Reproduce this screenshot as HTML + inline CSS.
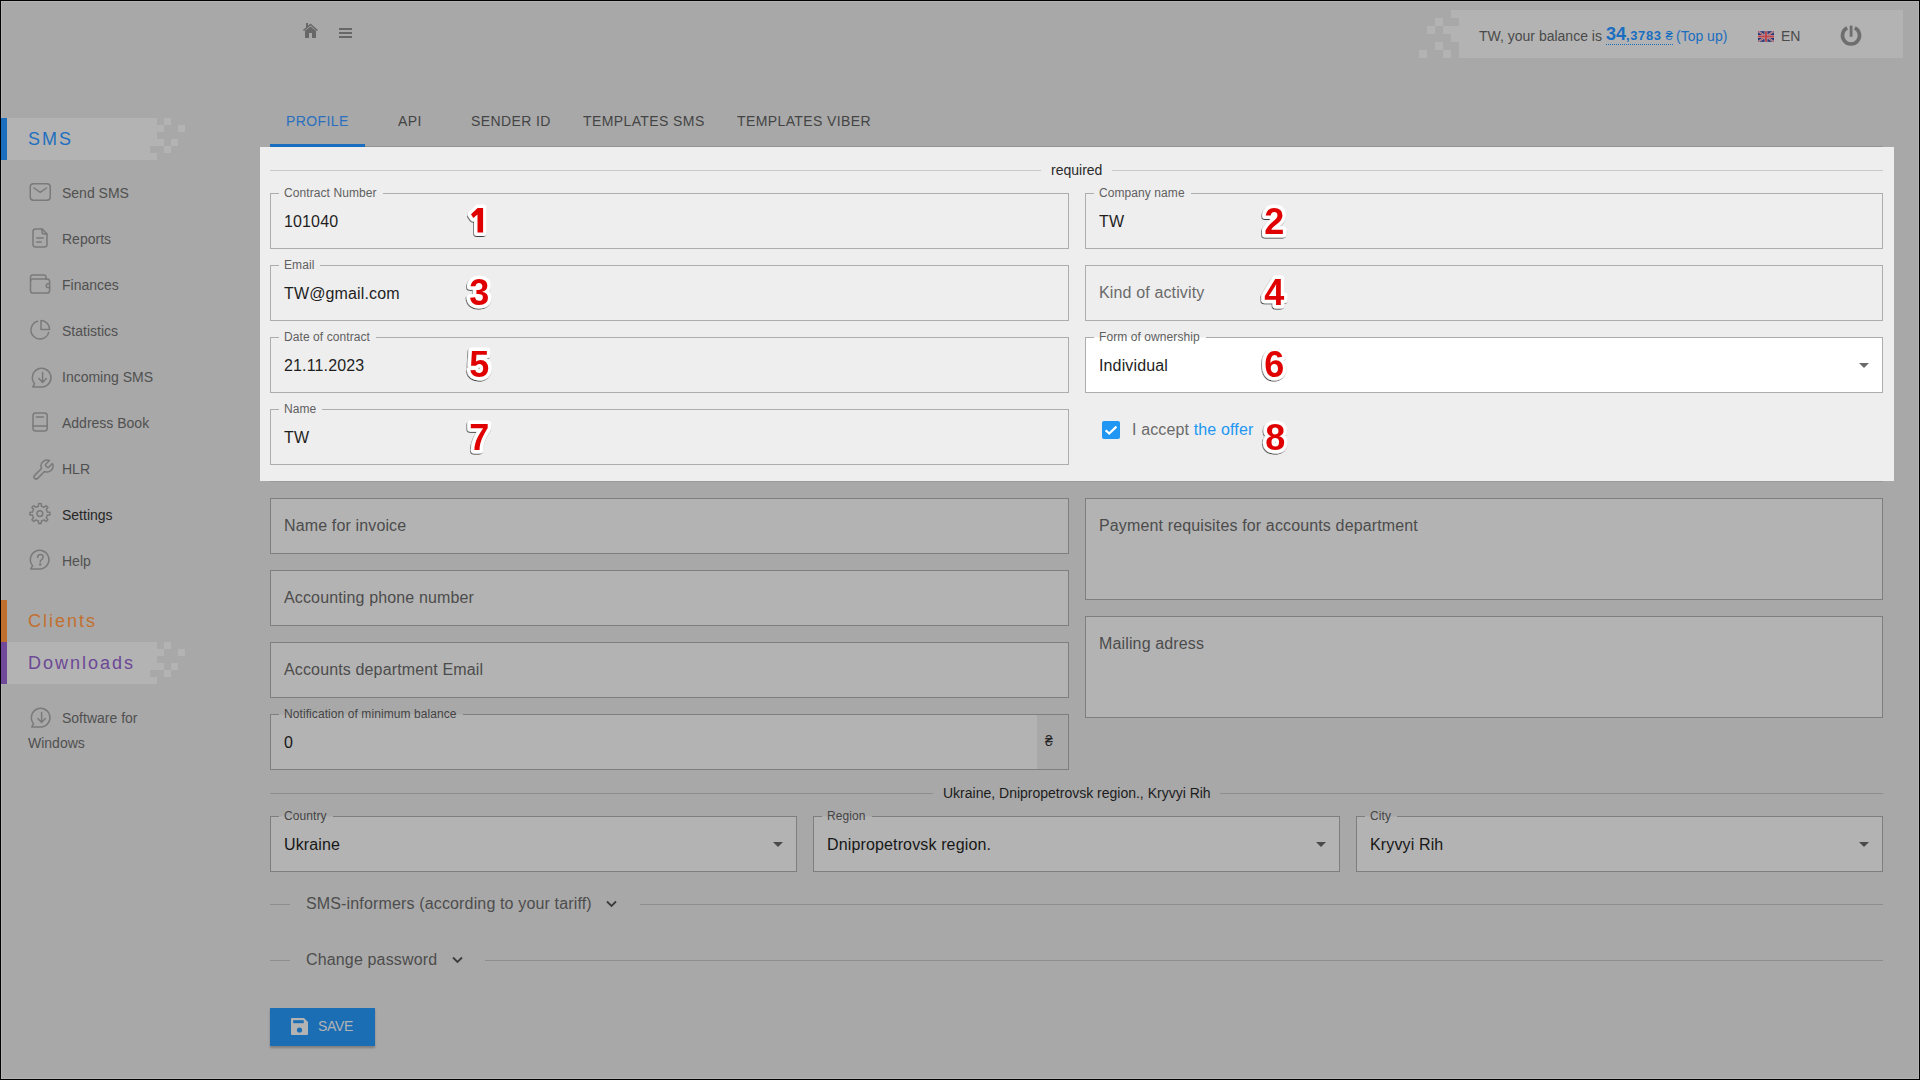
<!DOCTYPE html>
<html><head><meta charset="utf-8">
<style>
html,body{margin:0;padding:0;}
body{width:1920px;height:1080px;overflow:hidden;position:relative;background:#a8a8a8;font-family:"Liberation Sans",sans-serif;}
.a{position:absolute;white-space:nowrap;}
.f12{font-size:12px;line-height:12px;}
.f13{font-size:13px;line-height:13px;}
.f14{font-size:14px;line-height:14px;}
.f16{font-size:16px;line-height:16px;letter-spacing:0.14px;}
.f18{font-size:18px;line-height:18px;}
.blk{position:absolute;background:#b3b3b3;}
.px{position:absolute;width:7px;height:7px;background:#b3b3b3;}
.side{color:#505050;}
.ic{position:absolute;}
/* inputs */
.box{position:absolute;box-sizing:border-box;border:1px solid #a6a6a6;}
.dbox{position:absolute;box-sizing:border-box;border:1px solid #7f7f7f;background:#b3b3b3;}
.bx{position:absolute;box-sizing:border-box;border:1px solid #a9a9a9;}
.lb{position:absolute;font-size:12px;line-height:12px;padding:0 6px 0 5px;white-space:nowrap;letter-spacing:0.08px;}
</style></head>
<body>
<!-- frame -->
<div class="a" style="left:0;top:0;width:1920px;height:1080px;box-sizing:border-box;border:1px solid #000;"></div>
<div class="a" style="left:1px;top:1px;width:1918px;height:1078px;box-sizing:border-box;border:1px solid #b3b3b3;"></div>

<!-- header icons -->
<svg class="ic" style="left:302px;top:22px" width="17" height="17" viewBox="0 0 17 17">
  <path d="M1.5 8.5 L8.5 2.5 L15.5 8.5" fill="none" stroke="#676767" stroke-width="1.6"/>
  <rect x="4" y="1" width="2" height="4" fill="#676767"/>
  <path d="M3 16 V8.8 L8.5 4.5 L14 8.8 V16 H10 V11 H7 V16 Z" fill="#676767"/>
</svg>
<div class="a" style="left:339px;top:28px;width:13px;height:2px;background:#676767"></div>
<div class="a" style="left:339px;top:32px;width:13px;height:2px;background:#676767"></div>
<div class="a" style="left:339px;top:36px;width:13px;height:2px;background:#676767"></div>

<!-- balance bar -->
<div class="a" style="left:1459px;top:10px;width:444px;height:48px;background:#b3b3b3"></div>
<div class="a" style="left:1451px;top:10px;width:8px;height:8px;background:#b3b3b3"></div>
<div class="a" style="left:1443px;top:26px;width:16px;height:8px;background:#b3b3b3"></div>
<div class="a" style="left:1451px;top:34px;width:8px;height:8px;background:#b3b3b3"></div>
<div class="a" style="left:1435px;top:18px;width:8px;height:8px;background:#b3b3b3"></div>
<div class="a" style="left:1427px;top:26px;width:8px;height:8px;background:#b3b3b3"></div>
<div class="a" style="left:1435px;top:42px;width:8px;height:8px;background:#b3b3b3"></div>
<div class="a" style="left:1419px;top:50px;width:8px;height:8px;background:#b3b3b3"></div>
<div class="a" style="left:1443px;top:50px;width:8px;height:8px;background:#b3b3b3"></div>
<div class="a f14" style="left:1479px;top:29px;color:#4a4a4a">TW, your balance is</div>
<div class="a" style="left:1606px;top:25px;color:#1a6ec0;font-weight:bold;font-size:18px;line-height:18px">34<span style="font-size:13px;letter-spacing:0.6px">,3783</span><span style="font-size:13px;font-weight:normal;margin-left:4px">₴</span></div>
<div class="a" style="left:1606px;top:44px;width:67px;height:0;border-top:1px dotted #1a6ec0"></div>
<div class="a f14" style="left:1676px;top:29px;color:#1a6ec0">(Top up)</div>
<div class="a f14" style="left:1781px;top:29px;color:#4a4a4a">EN</div>

<!-- sidebar -->
<div class="a" style="left:7px;top:118px;width:150px;height:28px;background:#b3b3b3"></div>
<div class="a" style="left:7px;top:146px;width:143px;height:7px;background:#b3b3b3"></div>
<div class="a" style="left:7px;top:153px;width:150px;height:7px;background:#b3b3b3"></div>
<div class="a" style="left:164px;top:118px;width:7px;height:7px;background:#b3b3b3"></div>
<div class="a" style="left:157px;top:125px;width:7px;height:7px;background:#b3b3b3"></div>
<div class="a" style="left:178px;top:125px;width:7px;height:7px;background:#b3b3b3"></div>
<div class="a" style="left:157px;top:139px;width:7px;height:7px;background:#b3b3b3"></div>
<div class="a" style="left:171px;top:139px;width:7px;height:7px;background:#b3b3b3"></div>
<div class="a" style="left:164px;top:146px;width:7px;height:7px;background:#b3b3b3"></div>
<div class="a" style="left:1px;top:118px;width:6px;height:42px;background:#1b6ebd"></div>
<div class="a f18" style="left:28px;top:130px;color:#1e6fc0;letter-spacing:2px">SMS</div>

<div class="a f14 side" style="left:62px;top:186px">Send SMS</div>
<div class="a f14 side" style="left:62px;top:232px">Reports</div>
<div class="a f14 side" style="left:62px;top:278px">Finances</div>
<div class="a f14 side" style="left:62px;top:324px">Statistics</div>
<div class="a f14 side" style="left:62px;top:370px">Incoming SMS</div>
<div class="a f14 side" style="left:62px;top:416px">Address Book</div>
<div class="a f14 side" style="left:62px;top:462px">HLR</div>
<div class="a f14" style="left:62px;top:508px;color:#262626">Settings</div>
<div class="a f14 side" style="left:62px;top:554px">Help</div>

<div class="a" style="left:1px;top:600px;width:6px;height:42px;background:#c06f2c"></div>
<div class="a f18" style="left:28px;top:612px;color:#c2702f;letter-spacing:2px">Clients</div>
<div class="a" style="left:7px;top:642px;width:150px;height:28px;background:#b3b3b3"></div>
<div class="a" style="left:7px;top:670px;width:143px;height:7px;background:#b3b3b3"></div>
<div class="a" style="left:7px;top:677px;width:150px;height:7px;background:#b3b3b3"></div>
<div class="a" style="left:164px;top:642px;width:7px;height:7px;background:#b3b3b3"></div>
<div class="a" style="left:157px;top:649px;width:7px;height:7px;background:#b3b3b3"></div>
<div class="a" style="left:178px;top:649px;width:7px;height:7px;background:#b3b3b3"></div>
<div class="a" style="left:157px;top:663px;width:7px;height:7px;background:#b3b3b3"></div>
<div class="a" style="left:171px;top:663px;width:7px;height:7px;background:#b3b3b3"></div>
<div class="a" style="left:164px;top:670px;width:7px;height:7px;background:#b3b3b3"></div>
<div class="a" style="left:1px;top:642px;width:6px;height:42px;background:#70499a"></div>
<div class="a f18" style="left:28px;top:654px;color:#6c4896;letter-spacing:2px">Downloads</div>

<div class="a f14 side" style="left:62px;top:711px">Software for</div>
<div class="a f14 side" style="left:28px;top:736px">Windows</div>

<!-- tabs -->
<div class="a f14" style="left:286px;top:114px;color:#2a6fbf;letter-spacing:0.4px">PROFILE</div>
<div class="a f14" style="left:398px;top:114px;color:#444;letter-spacing:0.4px">API</div>
<div class="a f14" style="left:471px;top:114px;color:#444;letter-spacing:0.4px">SENDER ID</div>
<div class="a f14" style="left:583px;top:114px;color:#444;letter-spacing:0.4px">TEMPLATES SMS</div>
<div class="a f14" style="left:737px;top:114px;color:#444;letter-spacing:0.4px">TEMPLATES VIBER</div>
<div class="a" style="left:270px;top:146px;width:1613px;height:1px;background:#939393"></div>
<div class="a" style="left:270px;top:144px;width:95px;height:3px;background:#1a6cbf"></div>

<!-- PANEL -->
<div class="a" style="left:260px;top:147px;width:1634px;height:334px;background:#eeeeee"></div>
<div class="a" style="left:270px;top:481px;width:1613px;height:1px;background:#999"></div>

<svg width="0" height="0" style="position:absolute"><defs><filter id="sh" x="-30%" y="-30%" width="160%" height="160%"><feDropShadow dx="-0.6" dy="1" stdDeviation="0.5" flood-color="#000" flood-opacity="0.75"/></filter></defs></svg>
<div class="bx" style="left:270px;top:193px;width:799px;height:56px;border-color:#adadad;background:transparent"></div>
<div class="lb" style="left:279px;top:187px;color:#606060;background:linear-gradient(#eeeeee 0,#eeeeee 6px,#eeeeee 7px)">Contract Number</div>
<div class="a f16" style="left:284px;top:214px;color:#1e1e1e">101040</div>
<div class="bx" style="left:1085px;top:193px;width:798px;height:56px;border-color:#adadad;background:transparent"></div>
<div class="lb" style="left:1094px;top:187px;color:#606060;background:linear-gradient(#eeeeee 0,#eeeeee 6px,#eeeeee 7px)">Company name</div>
<div class="a f16" style="left:1099px;top:214px;color:#1e1e1e">TW</div>
<div class="bx" style="left:270px;top:265px;width:799px;height:56px;border-color:#adadad;background:transparent"></div>
<div class="lb" style="left:279px;top:259px;color:#606060;background:linear-gradient(#eeeeee 0,#eeeeee 6px,#eeeeee 7px)">Email</div>
<div class="a f16" style="left:284px;top:286px;color:#1e1e1e">TW@gmail.com</div>
<div class="bx" style="left:1085px;top:265px;width:798px;height:56px;border-color:#adadad;background:transparent"></div>
<div class="a f16" style="left:1099px;top:285px;color:#6a6a6a">Kind of activity</div>
<div class="bx" style="left:270px;top:337px;width:799px;height:56px;border-color:#adadad;background:transparent"></div>
<div class="lb" style="left:279px;top:331px;color:#606060;background:linear-gradient(#eeeeee 0,#eeeeee 6px,#eeeeee 7px)">Date of contract</div>
<div class="a f16" style="left:284px;top:358px;color:#1e1e1e">21.11.2023</div>
<div class="bx" style="left:1085px;top:337px;width:798px;height:56px;border-color:#adadad;background:#ffffff"></div>
<div class="lb" style="left:1094px;top:331px;color:#606060;background:linear-gradient(#eeeeee 0,#eeeeee 6px,#ffffff 7px)">Form of ownership</div>
<div class="a f16" style="left:1099px;top:358px;color:#1e1e1e">Individual</div>
<svg class="a" style="left:1859px;top:363px" width="10" height="5" viewBox="0 0 10 5"><path d="M0 0H10L5 5Z" fill="#6a6a6a"/></svg>
<div class="bx" style="left:270px;top:409px;width:799px;height:56px;border-color:#adadad;background:transparent"></div>
<div class="lb" style="left:279px;top:403px;color:#606060;background:linear-gradient(#eeeeee 0,#eeeeee 6px,#eeeeee 7px)">Name</div>
<div class="a f16" style="left:284px;top:430px;color:#1e1e1e">TW</div>
<div class="a" style="left:1102px;top:421px;width:18px;height:18px;border-radius:2px;background:#2196f3"></div>
<svg class="a" style="left:1102px;top:421px" width="18" height="18" viewBox="0 0 18 18"><path d="M3.6 9.2 L7.2 12.6 L14.4 5.6" fill="none" stroke="#fff" stroke-width="2.2"/></svg>
<div class="a f16" style="left:1132px;top:422px;color:#6a6a6a">I accept <span style="color:#2196f3">the offer</span></div>
<div class="a" style="left:270px;top:170px;width:771px;height:1px;background:#c9c9c9"></div>
<div class="a" style="left:1112px;top:170px;width:771px;height:1px;background:#c9c9c9"></div>
<div class="a f14" style="left:1051px;top:163px;color:#2a2a2a">required</div>
<div class="bx" style="left:270px;top:498px;width:799px;height:56px;border-color:#7e7e7e;background:#b3b3b3"></div>
<div class="a f16" style="left:284px;top:518px;color:#4c4c4c">Name for invoice</div>
<div class="bx" style="left:270px;top:570px;width:799px;height:56px;border-color:#7e7e7e;background:#b3b3b3"></div>
<div class="a f16" style="left:284px;top:590px;color:#4c4c4c">Accounting phone number</div>
<div class="bx" style="left:270px;top:642px;width:799px;height:56px;border-color:#7e7e7e;background:#b3b3b3"></div>
<div class="a f16" style="left:284px;top:662px;color:#4c4c4c">Accounts department Email</div>
<div class="bx" style="left:270px;top:714px;width:799px;height:56px;border-color:#7e7e7e;background:#b3b3b3"></div>
<div class="lb" style="left:279px;top:708px;color:#444444;background:linear-gradient(#a8a8a8 0,#a8a8a8 6px,#b3b3b3 7px)">Notification of minimum balance</div>
<div class="a f16" style="left:284px;top:735px;color:#171717">0</div>
<div class="a" style="left:1037px;top:715px;width:31px;height:54px;background:#a8a8a8"></div>
<div class="a f14" style="left:1045px;top:734px;color:#262626">₴</div>
<div class="bx" style="left:1085px;top:498px;width:798px;height:102px;border-color:#7e7e7e;background:#b3b3b3"></div>
<div class="a f16" style="left:1099px;top:518px;color:#4c4c4c">Payment requisites for accounts department</div>
<div class="bx" style="left:1085px;top:616px;width:798px;height:102px;border-color:#7e7e7e;background:#b3b3b3"></div>
<div class="a f16" style="left:1099px;top:636px;color:#4c4c4c">Mailing adress</div>
<div class="a" style="left:270px;top:793px;width:663px;height:1px;background:#8e8e8e"></div>
<div class="a" style="left:1220px;top:793px;width:663px;height:1px;background:#8e8e8e"></div>
<div class="a f14" style="left:943px;top:786px;color:#1c1c1c">Ukraine, Dnipropetrovsk region., Kryvyi Rih</div>
<div class="bx" style="left:270px;top:816px;width:527px;height:56px;border-color:#7e7e7e;background:#b3b3b3"></div>
<div class="lb" style="left:279px;top:810px;color:#444444;background:linear-gradient(#a8a8a8 0,#a8a8a8 6px,#b3b3b3 7px)">Country</div>
<div class="a f16" style="left:284px;top:837px;color:#171717">Ukraine</div>
<svg class="a" style="left:773px;top:842px" width="10" height="5" viewBox="0 0 10 5"><path d="M0 0H10L5 5Z" fill="#4a4a4a"/></svg>
<div class="bx" style="left:813px;top:816px;width:527px;height:56px;border-color:#7e7e7e;background:#b3b3b3"></div>
<div class="lb" style="left:822px;top:810px;color:#444444;background:linear-gradient(#a8a8a8 0,#a8a8a8 6px,#b3b3b3 7px)">Region</div>
<div class="a f16" style="left:827px;top:837px;color:#171717">Dnipropetrovsk region.</div>
<svg class="a" style="left:1316px;top:842px" width="10" height="5" viewBox="0 0 10 5"><path d="M0 0H10L5 5Z" fill="#4a4a4a"/></svg>
<div class="bx" style="left:1356px;top:816px;width:527px;height:56px;border-color:#7e7e7e;background:#b3b3b3"></div>
<div class="lb" style="left:1365px;top:810px;color:#444444;background:linear-gradient(#a8a8a8 0,#a8a8a8 6px,#b3b3b3 7px)">City</div>
<div class="a f16" style="left:1370px;top:837px;color:#171717">Kryvyi Rih</div>
<svg class="a" style="left:1859px;top:842px" width="10" height="5" viewBox="0 0 10 5"><path d="M0 0H10L5 5Z" fill="#4a4a4a"/></svg>
<div class="a" style="left:270px;top:904px;width:20px;height:1px;background:#8e8e8e"></div>
<div class="a" style="left:640px;top:904px;width:1243px;height:1px;background:#8e8e8e"></div>
<div class="a f16" style="left:306px;top:896px;color:#4d4d4d;letter-spacing:0.15px">SMS-informers (according to your tariff)</div>
<svg class="a" style="left:606px;top:900px" width="11" height="8" viewBox="0 0 11 8"><path d="M1 1.5 L5.5 6 L10 1.5" fill="none" stroke="#3c3c3c" stroke-width="1.8"/></svg>
<div class="a" style="left:270px;top:960px;width:20px;height:1px;background:#8e8e8e"></div>
<div class="a" style="left:485px;top:960px;width:1398px;height:1px;background:#8e8e8e"></div>
<div class="a f16" style="left:306px;top:952px;color:#4d4d4d;letter-spacing:0.15px">Change password</div>
<svg class="a" style="left:452px;top:956px" width="11" height="8" viewBox="0 0 11 8"><path d="M1 1.5 L5.5 6 L10 1.5" fill="none" stroke="#3c3c3c" stroke-width="1.8"/></svg>
<div class="a" style="left:270px;top:1008px;width:105px;height:38px;background:#1b6db4;box-shadow:0 2px 2px rgba(0,0,0,0.25)"></div>
<svg class="a" style="left:291px;top:1018px" width="17" height="17" viewBox="0 0 17 17"><path d="M1 0H13L17 4V16Q17 17 16 17H1Q0 17 0 16V1Q0 0 1 0Z" fill="#b3b3b3"/><rect x="2.2" y="2.2" width="10.5" height="3" fill="#1b6db4"/><circle cx="8.5" cy="12" r="2.6" fill="#1b6db4"/></svg>
<div class="a f14" style="left:318px;top:1019px;color:#b3b3b3;letter-spacing:-0.35px">SAVE</div>
<svg class="a" style="left:0;top:0;overflow:visible" width="1" height="1"><path d="M477.6 208 H483.1 V232.6 H477.5 V214.6 L473.3 217.9 L471 214.3 Z" fill="#e00000" stroke="#fff" stroke-width="7" stroke-linejoin="round" paint-order="stroke" filter="url(#sh)"/></svg>
<svg class="a" style="left:1258px;top:201px;overflow:visible" width="34" height="42" viewBox="0 0 34 42"><text x="6.3" y="33.3" font-family="Liberation Sans" font-weight="bold" font-size="36" fill="#e00000" stroke="#fff" stroke-width="7" stroke-linejoin="round" paint-order="stroke" filter="url(#sh)">2</text></svg>
<svg class="a" style="left:463px;top:272px;overflow:visible" width="34" height="42" viewBox="0 0 34 42"><text x="6.3" y="33.3" font-family="Liberation Sans" font-weight="bold" font-size="36" fill="#e00000" stroke="#fff" stroke-width="7" stroke-linejoin="round" paint-order="stroke" filter="url(#sh)">3</text></svg>
<svg class="a" style="left:1258px;top:272px;overflow:visible" width="34" height="42" viewBox="0 0 34 42"><text x="6.3" y="33.3" font-family="Liberation Sans" font-weight="bold" font-size="36" fill="#e00000" stroke="#fff" stroke-width="7" stroke-linejoin="round" paint-order="stroke" filter="url(#sh)">4</text></svg>
<svg class="a" style="left:463px;top:344px;overflow:visible" width="34" height="42" viewBox="0 0 34 42"><text x="6.3" y="33.3" font-family="Liberation Sans" font-weight="bold" font-size="36" fill="#e00000" stroke="#fff" stroke-width="7" stroke-linejoin="round" paint-order="stroke" filter="url(#sh)">5</text></svg>
<svg class="a" style="left:1258px;top:344px;overflow:visible" width="34" height="42" viewBox="0 0 34 42"><text x="6.3" y="33.3" font-family="Liberation Sans" font-weight="bold" font-size="36" fill="#e00000" stroke="#fff" stroke-width="7" stroke-linejoin="round" paint-order="stroke" filter="url(#sh)">6</text></svg>
<svg class="a" style="left:463px;top:417px;overflow:visible" width="34" height="42" viewBox="0 0 34 42"><text x="6.3" y="33.3" font-family="Liberation Sans" font-weight="bold" font-size="36" fill="#e00000" stroke="#fff" stroke-width="7" stroke-linejoin="round" paint-order="stroke" filter="url(#sh)">7</text></svg>
<svg class="a" style="left:1259px;top:417px;overflow:visible" width="34" height="42" viewBox="0 0 34 42"><text x="6.3" y="33.3" font-family="Liberation Sans" font-weight="bold" font-size="36" fill="#e00000" stroke="#fff" stroke-width="7" stroke-linejoin="round" paint-order="stroke" filter="url(#sh)">8</text></svg>
<svg class="a" style="left:26px;top:179px" width="28" height="26" viewBox="26 179 28 26" fill="none" stroke="#7a7a7a" stroke-width="1.5" stroke-linecap="round" stroke-linejoin="round"><rect x="30.25" y="183.75" width="20" height="16.5" rx="3.2"/><path d="M34 188 L40.25 192.3 L46.5 188"/></svg>
<svg class="a" style="left:28px;top:224px" width="24" height="28" viewBox="28 224 24 28" fill="none" stroke="#7a7a7a" stroke-width="1.5" stroke-linecap="round" stroke-linejoin="round"><path d="M35.5 228.9 H42 L47 234 V244.5 Q47 246.9 44.6 246.9 H35.4 Q33 246.9 33 244.5 V231.3 Q33 228.9 35.5 228.9 Z"/><path d="M42 229 V231.8 Q42 234 44.2 234 H47"/><path d="M36.8 238 H43.2 M36.8 242 H41.2"/></svg>
<svg class="a" style="left:26px;top:270px" width="28" height="28" viewBox="26 270 28 28" fill="none" stroke="#7a7a7a" stroke-width="1.5" stroke-linecap="round" stroke-linejoin="round"><path d="M30.5 281 V277.2 Q30.5 275 32.7 275 H43.8 Q46 275 46 277.2 V279"/><rect x="30.5" y="279" width="19.1" height="14" rx="2.6"/><path d="M49.6 283.8 H47.8 Q46.2 283.8 46.2 285.6 Q46.2 287.6 47.8 287.6 H49.6"/></svg>
<svg class="a" style="left:26px;top:316px" width="28" height="28" viewBox="26 316 28 28" fill="none" stroke="#7a7a7a" stroke-width="1.5" stroke-linecap="round" stroke-linejoin="round"><path d="M37.6 321.3 A9 9 0 1 0 48.6 332.6"/><path d="M41 320.6 V329.6 H49.6 A8.7 8.7 0 0 0 41 320.6 Z"/></svg>
<svg class="a" style="left:27.5px;top:364px" width="28" height="28" viewBox="27.5 364 28 28" fill="none" stroke="#7a7a7a" stroke-width="1.5" stroke-linecap="round" stroke-linejoin="round"><path d="M42.10 386.90 H32.30 L34.10 383.70 A9.3 9.3 0 1 1 42.10 386.90 Z"/><path d="M42.1 372.6 V382.2 M38.4 378.6 L42.1 382.4 L45.8 378.6"/></svg>
<svg class="a" style="left:28px;top:408px" width="24" height="28" viewBox="28 408 24 28" fill="none" stroke="#7a7a7a" stroke-width="1.5" stroke-linecap="round" stroke-linejoin="round"><rect x="33" y="412.9" width="14.2" height="18" rx="2.6"/><path d="M33 425.9 H47.2 M36.4 417 H43.4"/></svg>
<svg class="a" style="left:31px;top:458px" width="24" height="24" viewBox="0 0 24 24" fill="none" stroke="#7a7a7a" stroke-width="1.5" stroke-linecap="round" stroke-linejoin="round"><path d="M14.7 6.3a1 1 0 0 0 0 1.4l1.6 1.6a1 1 0 0 0 1.4 0l3.77-3.77a6 6 0 0 1-7.94 7.94l-6.91 6.91a2.12 2.12 0 0 1-3-3l6.91-6.91a6 6 0 0 1 7.94-7.94l-3.76 3.76z"/></svg>
<svg class="a" style="left:26px;top:499px" width="28" height="28" viewBox="26 499 28 28" fill="none" stroke="#7a7a7a" stroke-width="1.5" stroke-linecap="round" stroke-linejoin="round"><path d="M38.39 506.15 L38.60 503.68 A10.0 10.0 0 0 1 41.20 503.68 L41.41 506.15 A7.6 7.6 0 0 1 44.10 507.27 L45.99 505.67 A10.0 10.0 0 0 1 47.83 507.51 L46.23 509.40 A7.6 7.6 0 0 1 47.35 512.09 L49.82 512.30 A10.0 10.0 0 0 1 49.82 514.90 L47.35 515.11 A7.6 7.6 0 0 1 46.23 517.80 L47.83 519.69 A10.0 10.0 0 0 1 45.99 521.53 L44.10 519.93 A7.6 7.6 0 0 1 41.41 521.05 L41.20 523.52 A10.0 10.0 0 0 1 38.60 523.52 L38.39 521.05 A7.6 7.6 0 0 1 35.70 519.93 L33.81 521.53 A10.0 10.0 0 0 1 31.97 519.69 L33.57 517.80 A7.6 7.6 0 0 1 32.45 515.11 L29.98 514.90 A10.0 10.0 0 0 1 29.98 512.30 L32.45 512.09 A7.6 7.6 0 0 1 33.57 509.40 L31.97 507.51 A10.0 10.0 0 0 1 33.81 505.67 L35.70 507.27 A7.6 7.6 0 0 1 38.39 506.15 Z"/><circle cx="39.9" cy="513.6" r="2.9"/></svg>
<svg class="a" style="left:26px;top:546px" width="28" height="28" viewBox="26 546 28 28" fill="none" stroke="#7a7a7a" stroke-width="1.5" stroke-linecap="round" stroke-linejoin="round"><path d="M40.60 568.90 H30.80 L32.60 565.70 A9.3 9.3 0 1 1 40.60 568.90 Z"/><path d="M37.6 557.4 Q37.8 554.6 40.4 554.6 Q43.1 554.6 43.1 557.1 Q43.1 558.8 41.3 559.8 Q40.2 560.5 40.2 562"/><circle cx="40.2" cy="564.6" r="0.5" fill="#7a7a7a"/></svg>
<svg class="a" style="left:27px;top:704px" width="28" height="28" viewBox="27 704 28 28" fill="none" stroke="#7a7a7a" stroke-width="1.5" stroke-linecap="round" stroke-linejoin="round"><path d="M41.60 726.90 H31.80 L33.60 723.70 A9.3 9.3 0 1 1 41.60 726.90 Z"/><path d="M41.6 712.6 V722.2 M37.9 718.6 L41.6 722.4 L45.3 718.6"/></svg>
<svg class="a" style="left:1758px;top:31px" width="16" height="11" viewBox="0 0 60 40"><rect width="60" height="40" fill="#2b3577"/><path d="M0 0L60 40M60 0L0 40" stroke="#b3b3b3" stroke-width="7"/><path d="M0 0L60 40M60 0L0 40" stroke="#b8434c" stroke-width="3"/><path d="M30 0V40M0 20H60" stroke="#b3b3b3" stroke-width="11"/><path d="M30 0V40M0 20H60" stroke="#c0424a" stroke-width="7"/></svg>
<svg class="a" style="left:1838px;top:22px" width="26" height="27" viewBox="1838 22 26 27" fill="none" stroke="#6e6e6e"><path d="M1847.2 27.9 A8.5 8.5 0 1 0 1854.8 27.9" stroke-width="3.6"/><path d="M1851.1 25.6 V36.8" stroke-width="2.8"/></svg>
</body></html>
